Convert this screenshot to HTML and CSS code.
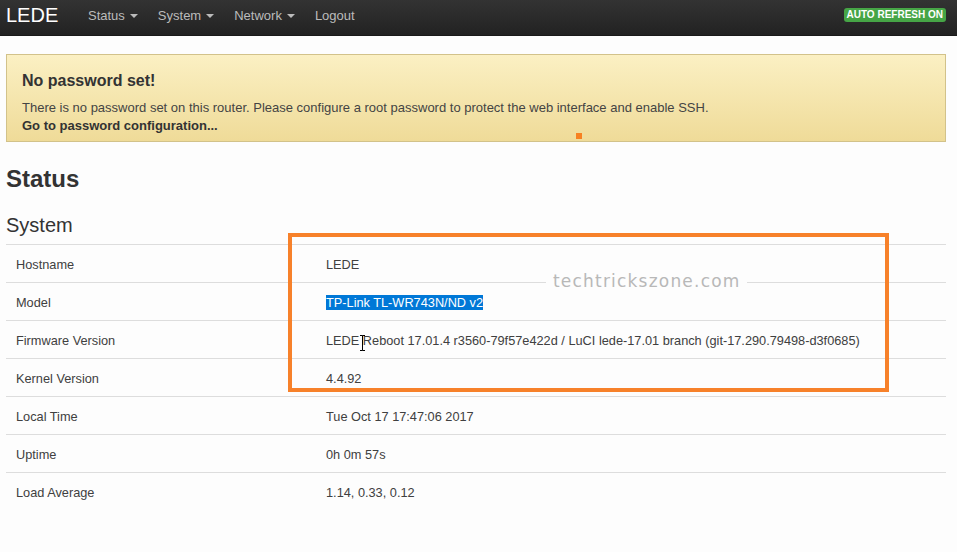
FILE: index.html
```html
<!DOCTYPE html>
<html>
<head>
<meta charset="utf-8">
<link rel="stylesheet" href="styles.css">
</head>
<body>
<header class="navbar">
  <a class="brand">LEDE</a>
  <nav class="menu">
    <a class="item">Status <span class="caret"></span></a>
    <a class="item">System <span class="caret"></span></a>
    <a class="item">Network <span class="caret"></span></a>
    <a class="item">Logout</a>
  </nav>
  <span class="badge">AUTO REFRESH ON</span>
</header>
<main class="container">
  <div class="alert">
    <h4 class="alert-title">No password set!</h4>
    <p class="alert-text">There is no password set on this router. Please configure a root password to protect the web interface and enable SSH.</p>
    <a class="alert-link">Go to password configuration...</a>
    <span class="dot"></span>
  </div>
  <h2 class="page-title">Status</h2>
  <h3 class="section-title">System</h3>
  <div class="table-wrap">
    <table class="info">
      <tr><td class="label">Hostname</td><td>LEDE</td></tr>
      <tr><td class="label">Model</td><td><span class="sel">TP-Link TL-WR743N/ND v2</span></td></tr>
      <tr><td class="label">Firmware Version</td><td>LEDE Reboot 17.01.4 r3560-79f57e422d / LuCI lede-17.01 branch (git-17.290.79498-d3f0685)</td></tr>
      <tr><td class="label">Kernel Version</td><td>4.4.92</td></tr>
      <tr><td class="label">Local Time</td><td>Tue Oct 17 17:47:06 2017</td></tr>
      <tr><td class="label">Uptime</td><td>0h 0m 57s</td></tr>
      <tr><td class="label">Load Average</td><td>1.14, 0.33, 0.12</td></tr>
    </table>
    <div class="highlight"></div>
    <span class="watermark">techtrickszone.com</span>
    <svg class="cursor" width="7" height="16" viewBox="0 0 7 16"><path d="M1 0.5h2.5M3.5 0.5h2.5M3.5 0.5v15M1 15.5h2.5M3.5 15.5h2.5" stroke="#000" stroke-width="1" fill="none"/></svg>
  </div>
</main>
</body>
</html>
```
FILE: styles.css
```css
* { box-sizing: border-box; }
body {
  margin: 0;
  background: #fdfdfd;
  font-family: "Liberation Sans", Arial, sans-serif;
  color: #404040;
  font-size: 12.75px;
}
.navbar {
  height: 36px;
  background: linear-gradient(#333333, #222222);
  display: flex;
  align-items: center;
  padding: 0 11px 0 6px;
  border-bottom: 1px solid #1a1a1a;
}
.brand {
  color: #ffffff;
  font-size: 20px;
  width: 82px;
  margin-top: -4px;
}
.menu { display: flex; margin-top: -4px; }
.item {
  color: #bbbbbb;
  font-size: 13px;
  margin-right: 20px;
  display: flex;
  align-items: center;
}
.caret {
  display: inline-block;
  width: 0; height: 0;
  border-left: 4px solid transparent;
  border-right: 4px solid transparent;
  border-top: 4px solid #bbbbbb;
  margin-left: 5px;
  margin-top: 1px;
}
.badge {
  margin-left: auto;
  background: #46a546;
  color: #fff;
  font-weight: bold;
  font-size: 10px;
  padding: 1px 3px;
  border-radius: 3px;
  line-height: 12px;
  margin-top: -6px;
}
.container {
  width: 940px;
  margin-left: 6px;
  padding-top: 18px;
}
.alert {
  position: relative;
  height: 88px;
  background: linear-gradient(#fbf0c3, #efdb98);
  border: 1px solid #d2c28a;
  padding: 17px 15px;
}
.alert-title {
  margin: 0 0 9px;
  font-size: 16px;
  font-weight: bold;
  color: #333;
  line-height: 18px;
}
.alert-text {
  margin: 0;
  font-size: 13px;
  line-height: 18px;
  color: #444;
}
.alert-link {
  display: block;
  font-size: 13px;
  font-weight: bold;
  color: #333;
  line-height: 18px;
}
.dot {
  position: absolute;
  left: 569px;
  top: 78px;
  width: 6px;
  height: 6px;
  background: #f78121;
}
.page-title {
  margin: 22px 0 0;
  font-size: 24px;
  font-weight: bold;
  color: #333;
  line-height: 30px;
}
.section-title {
  margin: 18px 0 0;
  font-size: 20px;
  font-weight: normal;
  color: #333;
  line-height: 26px;
}
.table-wrap { position: relative; margin-top: 6px; }
.info {
  width: 100%;
  border-collapse: collapse;
}
.info td {
  border-top: 1px solid #dddddd;
  padding: 12px 10px 10px;
  line-height: 15px;
  vertical-align: middle;
  white-space: nowrap;
}
.info td.label { width: 310px; }
.sel { background: #0078d7; color: #fff; }
.highlight {
  position: absolute;
  left: 282px;
  top: -11px;
  width: 601px;
  height: 159px;
  border: 4px solid #f7812a;
}
.watermark {
  position: absolute;
  left: 540px;
  top: 27px;
  padding: 0 6px 0 7px;
  background: #fdfdfd;
  color: #b8b8b8;
  font-family: "DejaVu Sans", sans-serif;
  font-size: 17px;
  letter-spacing: 1.2px;
  line-height: 20px;
}
.cursor {
  position: absolute;
  left: 353px;
  top: 91px;
}
```
